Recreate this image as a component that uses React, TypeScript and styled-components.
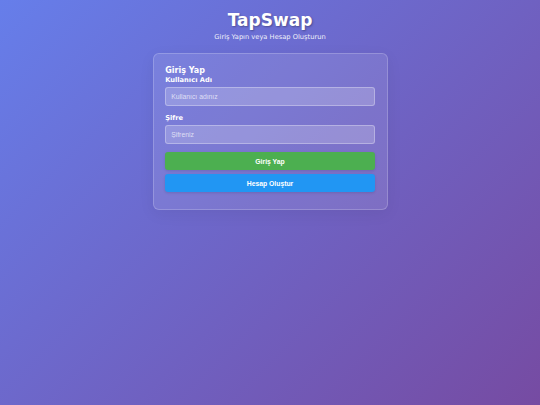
import React from "react";
import styled, { createGlobalStyle } from "styled-components";

const Global = createGlobalStyle`
  html, body { margin: 0; padding: 0; }
  html { background: linear-gradient(135deg, #667eea 0%, #764ba2 100%); min-height: 100%; }
  body {
    min-height: 405px;
    background: linear-gradient(135deg, #667eea 0%, #764ba2 100%);
    font-family: "DejaVu Sans", Verdana, sans-serif;
    color: #fff;
  }
  * { box-sizing: border-box; }
`;

const Page = styled.div`
  padding-top: 10px;
  display: flex;
  flex-direction: column;
  align-items: center;
`;

const Title = styled.h1`
  margin: 0;
  font-size: 17px;
  line-height: 20px;
  font-weight: 700;
  text-shadow: 1px 1px 2px rgba(0, 0, 0, 0.3);
`;

const Subtitle = styled.p`
  margin: 3px 0 0;
  font-size: 6.7px;
  line-height: 8px;
  opacity: 0.9;
`;

const Card = styled.div`
  margin-top: 11.5px;
  width: 235px;
  padding: 12px 11.7px 16.5px;
  border-radius: 6px;
  background: rgba(255, 255, 255, 0.1);
  border: 0.8px solid rgba(255, 255, 255, 0.2);
  box-shadow: 0 4px 16px rgba(0, 0, 0, 0.06);
  display: flex;
  flex-direction: column;
`;

const CardTitle = styled.h2`
  margin: 0;
  font-size: 8px;
  line-height: 10px;
  font-weight: 700;
`;

const Label = styled.label<{ $gap?: number }>`
  display: block;
  margin-top: ${(p) => p.$gap ?? 0}px;
  font-size: 6.7px;
  line-height: 8px;
  font-weight: 700;
`;

const Input = styled.input`
  display: block;
  margin-top: 2.7px;
  width: 100%;
  height: 19px;
  padding: 0 5px;
  border-radius: 3px;
  border: 0.8px solid rgba(255, 255, 255, 0.3);
  background: rgba(255, 255, 255, 0.2);
  color: #fff;
  font-family: "Liberation Sans", Arial, sans-serif;
  font-size: 6.8px;
  outline: none;
  &::placeholder { color: rgba(255, 255, 255, 0.7); }
`;

const Button = styled.button<{ $color: string; $gap: number }>`
  display: block;
  margin-top: ${(p) => p.$gap}px;
  width: 100%;
  height: 17.7px;
  border: none;
  border-radius: 3px;
  background: ${(p) => p.$color};
  color: #fff;
  font-family: "Liberation Sans", Arial, sans-serif;
  font-size: 6.8px;
  font-weight: 700;
  box-shadow: 0 1px 3px rgba(0, 0, 0, 0.12);
  cursor: pointer;
`;

export default function App() {
  return (
    <>
      <Global />
      <Page>
        <Title>TapSwap</Title>
        <Subtitle>Giriş Yapın veya Hesap Oluşturun</Subtitle>
        <Card>
          <CardTitle>Giriş Yap</CardTitle>
          <Label $gap={0.7}>Kullanıcı Adı</Label>
          <Input placeholder="Kullanıcı adınız" />
          <Label $gap={8.5}>Şifre</Label>
          <Input type="password" placeholder="Şifreniz" />
          <Button $color="#4CAF50" $gap={8.3}>Giriş Yap</Button>
          <Button $color="#2196F3" $gap={4.3}>Hesap Oluştur</Button>
        </Card>
      </Page>
    </>
  );
}
